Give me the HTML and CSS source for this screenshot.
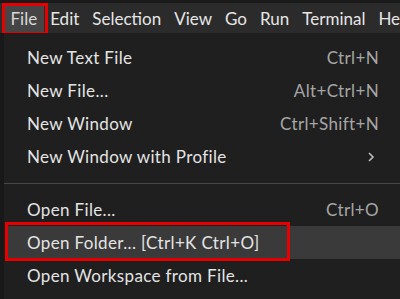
FILE: index.html
```html
<!DOCTYPE html>
<html>
<head>
<meta charset="utf-8">
<link rel="stylesheet" href="styles.css">
</head>
<body>
<div class="menubar">
  <div class="mb-item active">File</div>
  <div class="mb-item">Edit</div>
  <div class="mb-item">Selection</div>
  <div class="mb-item">View</div>
  <div class="mb-item">Go</div>
  <div class="mb-item">Run</div>
  <div class="mb-item">Terminal</div>
  <div class="mb-item">Help</div>
  <div class="annot annot-file"></div>
</div>
<div class="stage">
  <div class="edge"></div>
  <div class="menu">
    <div class="row"><span class="label">New Text File</span><span class="key">Ctrl+N</span></div>
    <div class="row"><span class="label">New File...</span><span class="key">Alt+Ctrl+N</span></div>
    <div class="row"><span class="label">New Window</span><span class="key">Ctrl+Shift+N</span></div>
    <div class="row"><span class="label">New Window with Profile</span><svg class="chev" width="8" height="12" viewBox="0 0 8 12"><polyline points="2,2 6,6 2,10" fill="none" stroke="#bdbdbd" stroke-width="1.6"/></svg></div>
    <div class="sep"></div>
    <div class="row"><span class="label">Open File...</span><span class="key">Ctrl+O</span></div>
    <div class="row hl"><span class="label">Open Folder... [Ctrl+K Ctrl+O]</span></div>
    <div class="row"><span class="label">Open Workspace from File...</span></div>
    <div class="annot annot-folder"></div>
  </div>
</div>
</body>
</html>
```
FILE: styles.css
```css
html, body {
  margin: 0;
  padding: 0;
}
body {
  width: 400px;
  height: 299px;
  overflow: hidden;
  background: #1f1f1f;
  font-family: "Lato", "Noto Sans", sans-serif;
  font-size: 17px;
  color: #e4e4e4;
}
.menubar {
  position: relative;
  display: flex;
  height: 30px;
  border-top: 3px solid #1a1a1a;
  background: #2b2b2b;
  padding-left: 4px;
  white-space: nowrap;
  overflow: hidden;
}
.mb-item {
  display: flex;
  align-items: center;
  padding: 0 6.5px;
  color: #e6e6e6;
}
.mb-item.active {
  background: #454545;
  color: #d8d8d8;
}
.annot {
  position: absolute;
  border: 3px solid #e80000;
  box-sizing: border-box;
  pointer-events: none;
}
.annot-file {
  left: 2px;
  top: 0;
  width: 46px;
  height: 32px;
}
.stage {
  display: flex;
  height: 266px;
}
.edge {
  width: 4px;
  background: #181818;
}
.menu {
  position: relative;
  flex: 1;
  padding-top: 8px;
  background: #1f1f1f;
}
.row {
  display: flex;
  align-items: center;
  justify-content: space-between;
  height: 33px;
  padding: 0 21px 0 23px;
  white-space: nowrap;
  letter-spacing: 0.35px;
}
.row.hl {
  background: #3a3a3a;
  margin-left: 1px;
  padding-left: 22px;
}
.key {
  color: #a6a6a6;
}
.chev {
  margin-right: 4px;
}
.sep {
  height: 20px;
  display: flex;
  align-items: center;
}
.sep::before {
  content: "";
  flex: 1;
  height: 1px;
  background: #474747;
}
.annot-folder {
  left: 1px;
  top: 189px;
  width: 285px;
  height: 39px;
}
```
